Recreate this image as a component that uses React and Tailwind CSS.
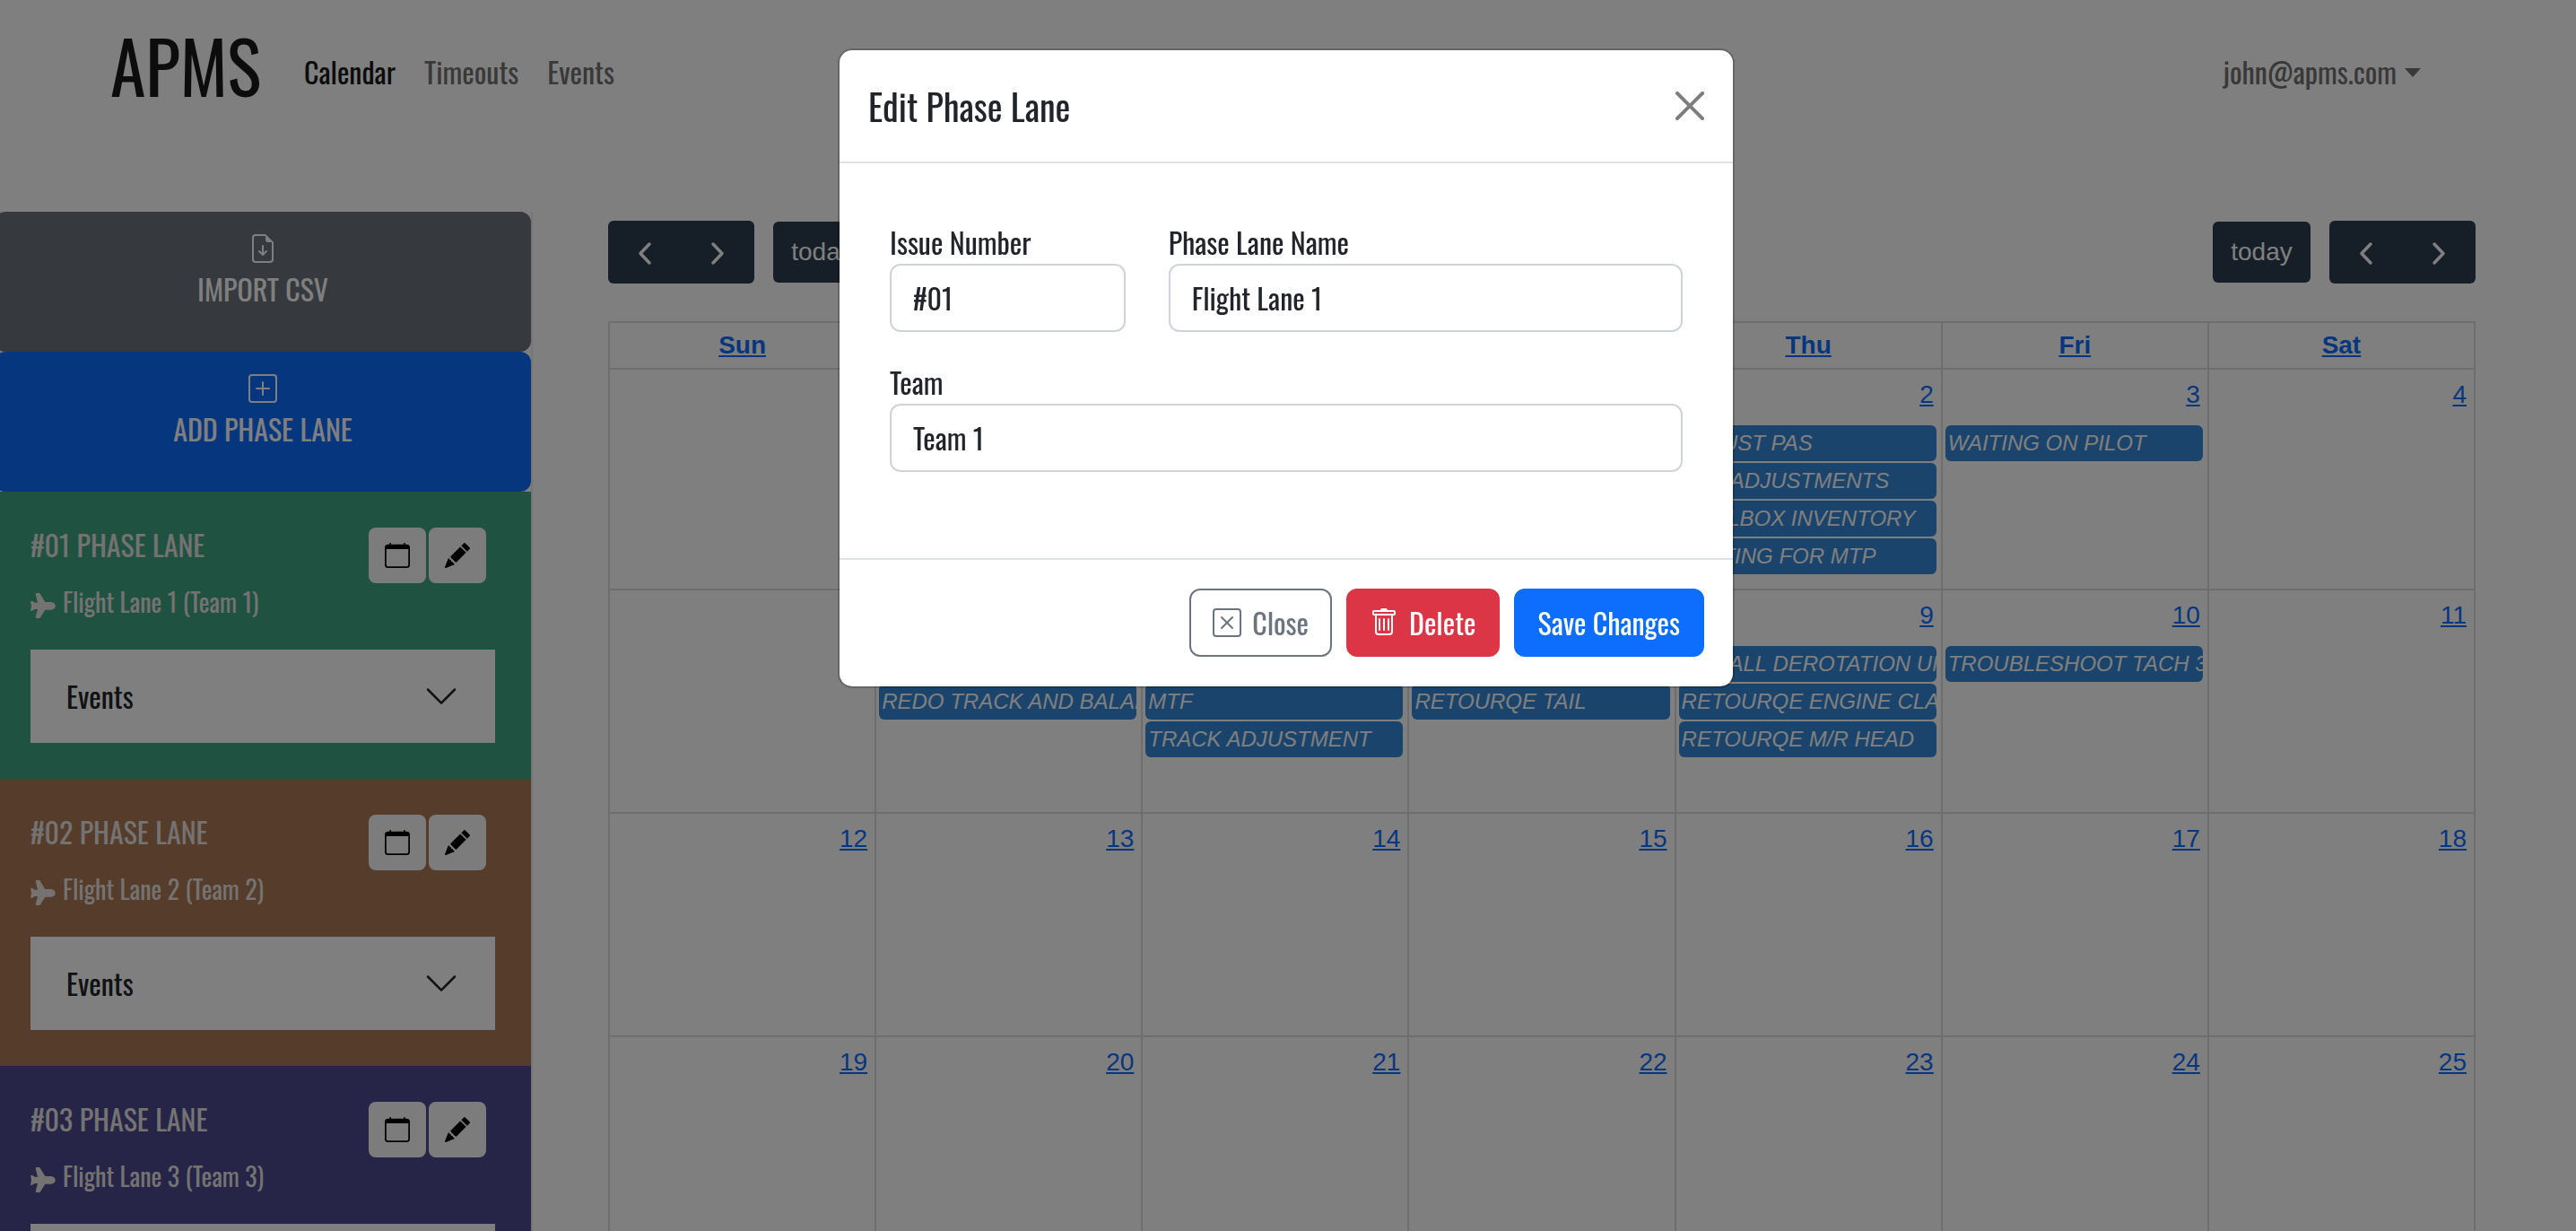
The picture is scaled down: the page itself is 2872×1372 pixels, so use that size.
import {
  BsCalendar,
  BsChevronDown,
  BsFileEarmarkArrowDown,
  BsPencilFill,
  BsPlusSquare,
  BsTrash,
  BsXSquare,
} from "react-icons/bs";

const lanes = [
  { id: "01", name: "Flight Lane 1", team: "Team 1", bg: "bg-[#40a484]" },
  { id: "02", name: "Flight Lane 2", team: "Team 2", bg: "bg-[#ac7854]" },
  { id: "03", name: "Flight Lane 3", team: "Team 3", bg: "bg-[#4c4a90]" },
];

const dayNames = ["Sun", "Mon", "Tue", "Wed", "Thu", "Fri", "Sat"];

const weeks = [
  [
    {},
    {},
    {},
    { day: 1 },
    { day: 2, events: ["ADJUST PAS", "TAIL ADJUSTMENTS", "TOOLBOX INVENTORY", "WAITING FOR MTP"] },
    { day: 3, events: ["WAITING ON PILOT"] },
    { day: 4 },
  ],
  [
    { day: 5 },
    { day: 6, events: ["TRACK AND BALANCE", "REDO TRACK AND BALANCE"] },
    { day: 7, events: ["MTF", "MTF", "TRACK ADJUSTMENT"] },
    { day: 8, events: ["MTF", "RETOURQE TAIL"] },
    { day: 9, events: ["INSTALL DEROTATION UNIT", "RETOURQE ENGINE CLAMPS", "RETOURQE M/R HEAD"] },
    { day: 10, events: ["TROUBLESHOOT TACH 3"] },
    { day: 11 },
  ],
  [12, 13, 14, 15, 16, 17, 18].map((day) => ({ day })),
  [19, 20, 21, 22, 23, 24, 25].map((day) => ({ day })),
];

function PlaneIcon() {
  return (
    <svg viewBox="0 0 84 84" className="size-7 shrink-0" fill="currentColor" aria-hidden="true">
      <path d="M0 27h5q2 0 3 1l6 4h10L17 3q0-3 3-3h9q2 0 3 2l17 28h20q14 2 14 13t-14 13H49L33 82q-1 2-3 2H20q-3 0-3-3l7-27H14l-6 4q-1 1-3 1H0l3-16z" />
    </svg>
  );
}

function Arrow({ next }) {
  return (
    <svg viewBox="0 0 32 32" className="size-8" fill="none" stroke="currentColor" strokeWidth="3.5" strokeLinecap="round" strokeLinejoin="round" aria-hidden="true">
      <path d={next ? "M11 7l10 10.5-10 10.5" : "M21 7l-10 10.5 10 10.5"} />
    </svg>
  );
}

function PagerButtons() {
  return (
    <div className="flex h-[70px] w-[163px] overflow-hidden rounded-md bg-[#2c3e50] text-white">
      <button type="button" aria-label="Previous" className="flex flex-1 items-center justify-center">
        <Arrow />
      </button>
      <button type="button" aria-label="Next" className="flex flex-1 items-center justify-center">
        <Arrow next />
      </button>
    </div>
  );
}

function TodayButton() {
  return (
    <button type="button" className="h-[68px] w-[109px] rounded-md bg-[#2c3e50] text-[28px] text-white">
      today
    </button>
  );
}

function LaneCard({ lane }) {
  return (
    <section className={`${lane.bg} p-10 text-[#ebe6e5]`}>
      <div className="flex h-[99px] items-start justify-between">
        <div>
          <h2 className="text-[32px] leading-[38px]">#{lane.id} PHASE LANE</h2>
          <p className="mt-[27px] flex items-center gap-2 text-[28px] leading-[34px]">
            <span className="pt-2">
              <PlaneIcon />
            </span>
            {lane.name} ({lane.team})
          </p>
        </div>
        <div className="mr-[10px] flex gap-[3px] text-black">
          <button type="button" aria-label="Schedule" className="flex h-[62px] w-16 items-center justify-center rounded-lg bg-[#f8f9fa]">
            <BsCalendar className="size-7" />
          </button>
          <button type="button" aria-label="Edit" className="flex h-[62px] w-16 items-center justify-center rounded-lg bg-[#f8f9fa]">
            <BsPencilFill className="size-7" />
          </button>
        </div>
      </div>
      <button type="button" className="mt-[37px] flex h-[104px] w-full items-center justify-between bg-white px-10 text-[32px] text-[#212529]">
        Events
        <BsChevronDown className="size-10" />
      </button>
    </section>
  );
}

function SidebarButton({ icon: Icon, label, tone }) {
  return (
    <button type="button" className={`${tone} flex h-[156px] w-full flex-col items-center rounded-xl pt-[25px] text-[32px] leading-[48px] text-white`}>
      <Icon className="mb-[5px] size-8 shrink-0" />
      {label}
    </button>
  );
}

function Calendar() {
  return (
    <main className="min-w-0 flex-1 pt-[10px] pr-28 pl-21 font-['Liberation_Sans',Arial,sans-serif]">
      <div className="mb-[42px] flex items-center justify-between">
        <div className="flex items-center gap-[21px]">
          <PagerButtons />
          <TodayButton />
        </div>
        <div className="flex items-center gap-[21px]">
          <TodayButton />
          <PagerButtons />
        </div>
      </div>
      <table className="w-full table-fixed border-collapse text-[28px] text-[#0d6efd]">
        <thead>
          <tr className="h-[52px]">
            {dayNames.map((name) => (
              <th key={name} className="border-2 border-[#ddd] p-0 font-bold">
                <a href="#day" className="underline">{name}</a>
              </th>
            ))}
          </tr>
        </thead>
        <tbody>
          {weeks.map((week, w) => (
            <tr key={w} className="h-[249px] first:h-[246px]">
              {week.map((cell, d) => (
                <td key={d} className="overflow-hidden border-2 border-[#ddd] p-0 align-top">
                  {cell.day && (
                    <div className="pt-2 pr-2 text-right leading-[40px]">
                      <a href="#date" className="underline">{cell.day}</a>
                    </div>
                  )}
                  {cell.events && (
                    <ul className="mr-[5px] ml-[3px] mt-[14px] flex flex-col gap-[2px]">
                      {cell.events.map((title, i) => (
                        <li key={i} className="h-10 overflow-hidden rounded-md bg-[#3788d8] px-[3px] text-[24px] leading-[40px] whitespace-nowrap text-white italic">
                          {title}
                        </li>
                      ))}
                    </ul>
                  )}
                </td>
              ))}
            </tr>
          ))}
        </tbody>
      </table>
    </main>
  );
}

function Field({ id, label, value, className }) {
  return (
    <div className={className}>
      <label htmlFor={id} className="block leading-[48px]">{label}</label>
      <input id={id} type="text" defaultValue={value} className="block h-[76px] w-full rounded-xl border-2 border-[#ced4da] bg-white px-6 pb-[2px] outline-none" />
    </div>
  );
}

function EditModal() {
  return (
    <div className="fixed inset-0 flex items-start justify-center bg-black/50 pt-[54px] pr-1">
      <div role="dialog" aria-modal="true" aria-labelledby="modal-title" className="w-full max-w-[1000px] rounded-2xl border-2 border-black/20 bg-white bg-clip-padding text-[32px] text-[#212529]">
        <div className="flex items-center justify-between border-b-2 border-[#dee2e6] p-8">
          <h1 id="modal-title" className="text-[40px] leading-[60px]">Edit Phase Lane</h1>
          <button type="button" aria-label="Dismiss" className="opacity-50">
            <svg viewBox="0 0 16 16" className="size-8" fill="#000" aria-hidden="true">
              <path d="M.293.293a1 1 0 0 1 1.414 0L8 6.586 14.293.293a1 1 0 1 1 1.414 1.414L9.414 8l6.293 6.293a1 1 0 0 1-1.414 1.414L8 9.414l-6.293 6.293a1 1 0 0 1-1.414-1.414L6.586 8 .293 1.707a1 1 0 0 1 0-1.414z" />
            </svg>
          </button>
        </div>
        <form className="grid grid-cols-3 gap-x-12 gap-y-8 px-14 pt-16 pb-24">
          <Field id="issue" label="Issue Number" value="#01" className="" />
          <Field id="lane" label="Phase Lane Name" value="Flight Lane 1" className="col-span-2" />
          <Field id="team" label="Team" value="Team 1" className="col-span-3" />
        </form>
        <div className="flex justify-end gap-4 border-t-2 border-[#dee2e6] p-8 pb-[33px]">
          <button type="button" className="flex h-[76px] items-center gap-3 rounded-xl border-2 border-[#6c757d] px-6 text-[#6c757d]">
            <BsXSquare className="size-8" />
            Close
          </button>
          <button type="button" className="flex h-[76px] items-center gap-3 rounded-xl border-2 border-[#dc3545] bg-[#dc3545] px-6 text-white">
            <BsTrash className="size-8" />
            Delete
          </button>
          <button type="button" className="flex h-[76px] items-center rounded-xl border-2 border-[#0d6efd] bg-[#0d6efd] px-[25px] text-white">
            Save Changes
          </button>
        </div>
      </div>
    </div>
  );
}

export default function App() {
  return (
    <div className="h-screen overflow-hidden bg-white font-['Oswald',sans-serif] text-[#212529]">
      <header className="mb-22 flex items-center pt-3 pr-[172px] pl-[123px] text-[32px] leading-[48px] text-[#737373]">
        <a href="#home" className="pb-4 text-[80px] leading-[120px] text-[#191919]">APMS</a>
        <nav className="ml-12 flex gap-8">
          <a href="#calendar" className="text-[#191919]">Calendar</a>
          <a href="#timeouts">Timeouts</a>
          <a href="#events">Events</a>
        </nav>
        <button type="button" className="ml-auto flex items-center gap-2">
          john@apms.com
          <svg viewBox="0 0 20 12" className="h-3 w-5" fill="currentColor" aria-hidden="true">
            <path d="M1 2h18l-9 10z" />
          </svg>
        </button>
      </header>
      <div className="flex items-start">
        <aside className="-ml-[6px] w-[600px] shrink-0 border-r-2 border-[#eeeae8]">
          <SidebarButton icon={BsFileEarmarkArrowDown} label="IMPORT CSV" tone="bg-[#6c757d]" />
          <SidebarButton icon={BsPlusSquare} label="ADD PHASE LANE" tone="bg-[#0d6efd]" />
          {lanes.map((lane) => (
            <LaneCard key={lane.id} lane={lane} />
          ))}
        </aside>
        <Calendar />
      </div>
      <EditModal />
    </div>
  );
}
